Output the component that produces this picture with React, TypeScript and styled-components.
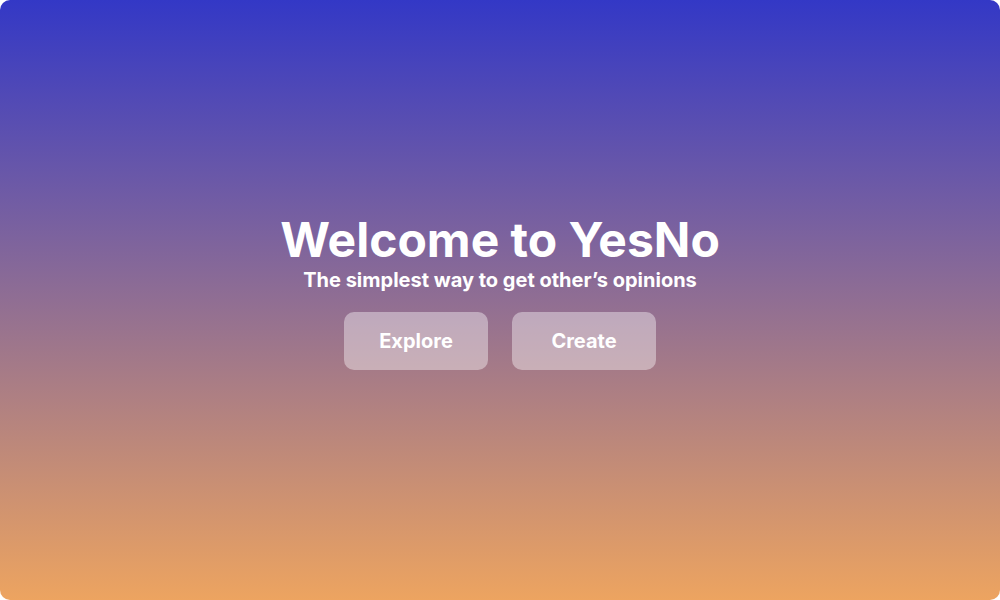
import React from "react";
import styled, { createGlobalStyle } from "styled-components";

const Global = createGlobalStyle`
  html, body { margin: 0; padding: 0; background: #ffffff; }
  body { font-family: Inter, "Noto Sans", sans-serif; }
`;

const Page = styled.div`
  box-sizing: border-box;
  width: 1000px;
  height: 600px;
  padding-bottom: 18px;
  border-radius: 10px;
  overflow: hidden;
  background: linear-gradient(180deg, rgb(51, 56, 198) 0%, rgb(237, 164, 96) 100%);
  display: flex;
  flex-direction: column;
  align-items: center;
  justify-content: center;
  color: #ffffff;
`;

const Title = styled.h1`
  margin: 0;
  font-size: 48px;
  line-height: 56px;
  font-weight: 700;
  letter-spacing: 0;
`;

const Subtitle = styled.p`
  margin: 0;
  font-size: 20px;
  line-height: 24px;
  font-weight: 700;
`;

const Actions = styled.div`
  display: flex;
  gap: 24px;
  margin-top: 20px;
`;

const Button = styled.button`
  width: 144px;
  height: 58px;
  border: none;
  border-radius: 10px;
  background: rgba(255, 255, 255, 0.4);
  color: #ffffff;
  font-family: Inter, "Noto Sans", sans-serif;
  font-size: 20px;
  font-weight: 700;
  cursor: pointer;
`;

export default function App() {
  return (
    <>
      <Global />
      <Page>
        <Title>Welcome to YesNo</Title>
        <Subtitle>The simplest way to get other’s opinions</Subtitle>
        <Actions>
          <Button>Explore</Button>
          <Button>Create</Button>
        </Actions>
      </Page>
    </>
  );
}
